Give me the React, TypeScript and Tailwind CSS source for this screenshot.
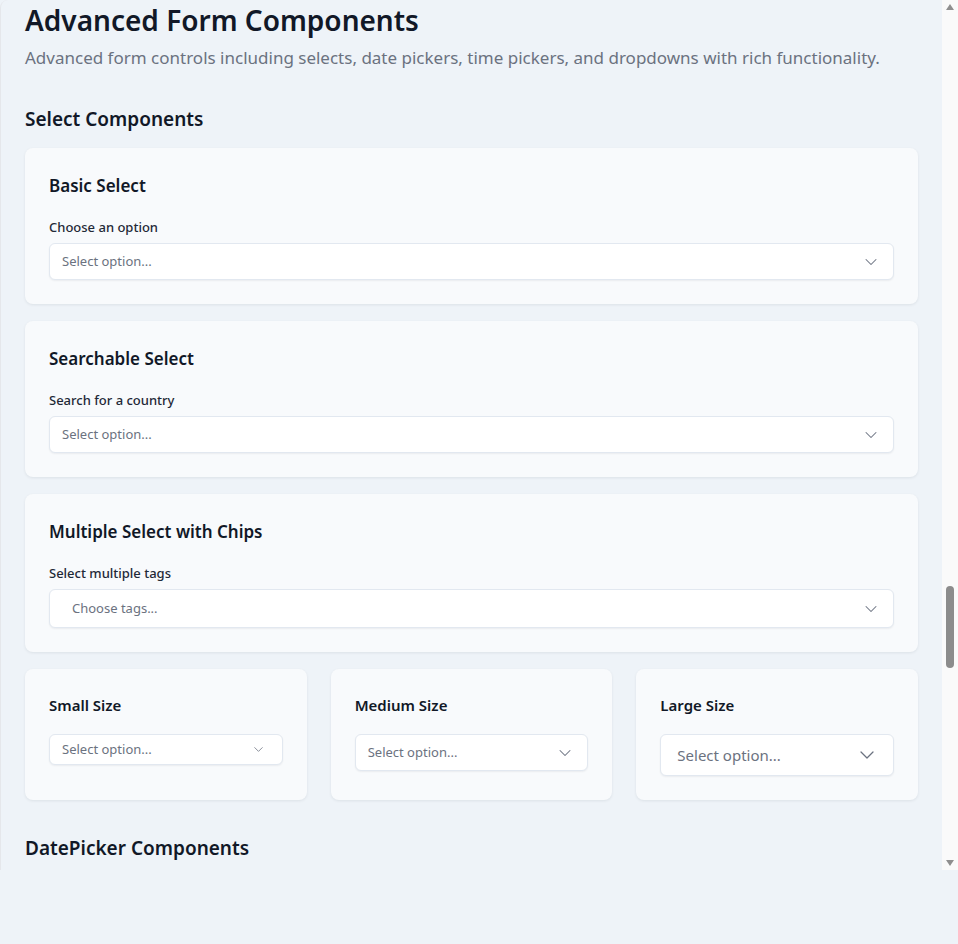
import { ChevronDown } from "lucide-react";

type Size = "sm" | "md" | "lg";

function SelectBox({
  placeholder = "Select option...",
  size = "md",
  tall = false,
  indent = false,
}: {
  placeholder?: string;
  size?: Size;
  tall?: boolean;
  indent?: boolean;
}) {
  const sizing = {
    sm: "h-[31px] text-[13px] pl-3 pr-4",
    md: tall ? "h-[39px] text-[13px] pl-3 pr-3" : "h-[37px] text-[13px] pl-3 pr-3",
    lg: "h-[42px] text-[15px] pl-4 pr-3.5",
  }[size];
  const icon = { sm: 15, md: 20, lg: 24 }[size];
  return (
    <div
      className={`flex w-full items-center justify-between rounded-md border border-[#e2e8f0] bg-white shadow-[0_1px_2px_rgba(15,23,42,0.06)] ${sizing}`}
    >
      <span className={`text-[#6b7280] ${indent ? "pl-2.5" : ""}`}>{placeholder}</span>
      <ChevronDown size={icon} strokeWidth={1.25} className="text-[#6b7280]" />
    </div>
  );
}

function Card({
  title,
  label,
  children,
}: {
  title: string;
  label?: string;
  children: React.ReactNode;
}) {
  return (
    <div className="rounded-lg bg-[#f8fafc] px-6 pt-[26px] pb-6 shadow-[0_1px_3px_rgba(15,23,42,0.08)]">
      <h3 className="text-[17px] font-semibold leading-6 text-[#111827]">{title}</h3>
      <p className="mt-[19px] text-[13px] font-medium leading-5 text-[#1f2937]">{label}</p>
      <div className="mt-1.5">{children}</div>
    </div>
  );
}

function SizeCard({ title, children }: { title: string; children: React.ReactNode }) {
  return (
    <div className="rounded-lg bg-[#f8fafc] px-6 pt-6 pb-6 shadow-[0_1px_3px_rgba(15,23,42,0.08)]">
      <h3 className="text-[15px] font-semibold leading-6 text-[#111827]">{title}</h3>
      <div className="mt-[17px]">{children}</div>
    </div>
  );
}

// classic scrollbar look, since the headless page hides the real one
function ScrollRail() {
  return (
    <div className="flex w-4 shrink-0 flex-col items-center bg-[#fafafa]">
      <svg width="8" height="6" viewBox="0 0 8 6" className="mt-[4px]">
        <path d="M4 0 L8 6 L0 6 Z" fill="#8f8f8f" />
      </svg>
      <div className="mt-[576px] h-[82px] w-2 rounded-full bg-[#8c8c8c]" />
      <div className="flex-1" />
      <svg width="8" height="6" viewBox="0 0 8 6" className="mb-[4px]">
        <path d="M0 0 L8 0 L4 6 Z" fill="#8f8f8f" />
      </svg>
    </div>
  );
}

export default function App() {
  return (
    <div
      className="h-screen bg-[#eef3f8]"
      style={{ fontFamily: '"Noto Sans", "Open Sans", sans-serif' }}
    >
      <div className="flex h-[870px]">
        <div className="flex-1 overflow-hidden rounded-tl-lg border-l border-[#e5e7eb]">
          <div className="px-6 pt-0.5">
            <h1 className="text-[28px] font-semibold leading-9 text-[#111827]">
              Advanced Form Components
            </h1>
            <p className="mt-1.5 text-[17px] leading-7 text-[#6b7280]">
              Advanced form controls including selects, date pickers, time pickers, and dropdowns with rich functionality.
            </p>

            <h2 className="mt-[33px] text-[19px] font-semibold leading-7 text-[#111827]">
              Select Components
            </h2>
            <div className="mt-[15px] flex flex-col gap-[17px]">
              <Card title="Basic Select" label="Choose an option">
                <SelectBox />
              </Card>
              <Card title="Searchable Select" label="Search for a country">
                <SelectBox />
              </Card>
              <Card title="Multiple Select with Chips" label="Select multiple tags">
                <SelectBox placeholder="Choose tags..." tall indent />
              </Card>
              <div className="grid grid-cols-3 gap-6">
                <SizeCard title="Small Size">
                  <SelectBox size="sm" />
                </SizeCard>
                <SizeCard title="Medium Size">
                  <SelectBox size="md" />
                </SizeCard>
                <SizeCard title="Large Size">
                  <SelectBox size="lg" />
                </SizeCard>
              </div>
            </div>

            <h2 className="mt-[34px] text-[19px] font-semibold leading-7 text-[#111827]">
              DatePicker Components
            </h2>
          </div>
        </div>
        <ScrollRail />
      </div>
    </div>
  );
}
